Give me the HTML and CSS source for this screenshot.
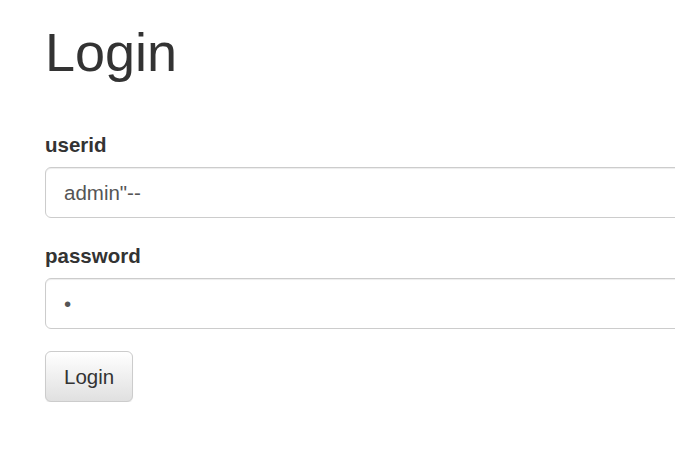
FILE: index.html
```html
<!DOCTYPE html>
<html lang="en">
<head>
    <meta charset="UTF-8">
    <meta name="viewport" content="width=device-width, initial-scale=1.0">
    <title>Login</title>
    <link rel="stylesheet" href="styles.css">
</head>
<body>
    <div class="container">
        <h1>Login</h1>
        <form class="login-form">
            <div class="form-group">
                <label for="userid">userid</label>
                <input class="form-control" type="text" id="userid" name="userid" value='admin"--'>
            </div>
            <div class="form-group">
                <label for="password">password</label>
                <input class="form-control" type="password" id="password" name="password" value="x">
            </div>
            <button class="btn" type="submit">Login</button>
        </form>
    </div>
</body>
</html>
```

FILE: styles.css
```css
body {
    margin: 0;
    font-family: 'Liberation Sans', Arial, sans-serif;
    color: #333;
    background-color: #fff;
    overflow: hidden;
}

.container {
    padding: 0 0 0 45px;
}

h1 {
    font-size: 54px;
    font-weight: normal;
    line-height: 1.1;
    margin: 23px 0 0 0;
}

.login-form {
    width: 680px;
    margin-top: 49px;
}

.form-group {
    margin-bottom: 24px;
}

.form-group:last-of-type {
    margin-bottom: 22px;
}

label {
    display: block;
    font-size: 20.5px;
    font-weight: bold;
    line-height: 27px;
    margin-bottom: 9px;
}

.form-control {
    display: block;
    box-sizing: border-box;
    width: 100%;
    height: 51px;
    padding: 0 18px;
    font-family: 'Liberation Sans', Arial, sans-serif;
    font-size: 20.5px;
    color: #555;
    background-color: #fff;
    border: 1px solid #ccc;
    border-radius: 6px;
    box-shadow: inset 0 1px 1px rgba(0, 0, 0, 0.075);
}

.btn {
    height: 51px;
    padding: 0 18px;
    font-family: 'Liberation Sans', Arial, sans-serif;
    font-size: 20.5px;
    color: #333;
    background-image: linear-gradient(to bottom, #fff 0%, #e0e0e0 100%);
    border: 1px solid #ccc;
    border-radius: 6px;
    box-shadow: inset 0 1px 0 rgba(255, 255, 255, 0.15), 0 1px 1px rgba(0, 0, 0, 0.075);
    cursor: pointer;
}
```
